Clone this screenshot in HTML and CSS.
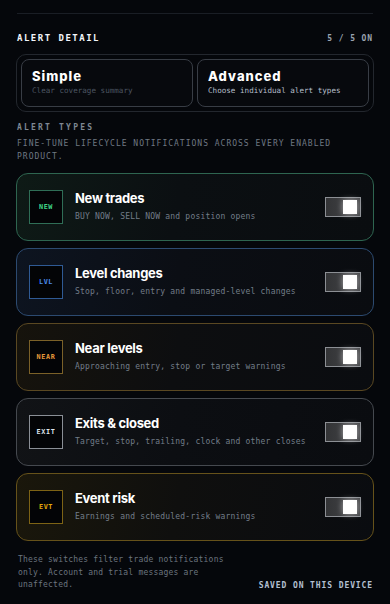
FILE: index.html
```html
<!DOCTYPE html>
<html>
<head>
<meta charset="utf-8">
<link rel="stylesheet" href="styles.css">
</head>
<body>
<div class="page">
  <div class="divider"></div>
  <div class="head-row">
    <span class="section-title">ALERT DETAIL</span>
    <span class="count">5 / 5 ON</span>
  </div>
  <div class="segment">
    <div class="seg-btn">
      <div class="seg-title">Simple</div>
      <div class="seg-desc">Clear coverage summary</div>
    </div>
    <div class="seg-btn active">
      <div class="seg-title">Advanced</div>
      <div class="seg-desc">Choose individual alert types</div>
    </div>
  </div>
  <div class="types-title">ALERT TYPES</div>
  <div class="types-desc">FINE-TUNE LIFECYCLE NOTIFICATIONS ACROSS EVERY ENABLED PRODUCT.</div>

  <div class="cards">
    <div class="card green">
      <div class="tag">NEW</div>
      <div class="info">
        <div class="title">New trades</div>
        <div class="desc">BUY NOW, SELL NOW and position opens</div>
      </div>
      <div class="toggle"><span class="knob"></span></div>
    </div>
    <div class="card blue">
      <div class="tag">LVL</div>
      <div class="info">
        <div class="title">Level changes</div>
        <div class="desc">Stop, floor, entry and managed-level changes</div>
      </div>
      <div class="toggle"><span class="knob"></span></div>
    </div>
    <div class="card orange">
      <div class="tag">NEAR</div>
      <div class="info">
        <div class="title">Near levels</div>
        <div class="desc">Approaching entry, stop or target warnings</div>
      </div>
      <div class="toggle"><span class="knob"></span></div>
    </div>
    <div class="card gray">
      <div class="tag">EXIT</div>
      <div class="info">
        <div class="title">Exits &amp; closed</div>
        <div class="desc">Target, stop, trailing, clock and other closes</div>
      </div>
      <div class="toggle"><span class="knob"></span></div>
    </div>
    <div class="card gold">
      <div class="tag">EVT</div>
      <div class="info">
        <div class="title">Event risk</div>
        <div class="desc">Earnings and scheduled-risk warnings</div>
      </div>
      <div class="toggle"><span class="knob"></span></div>
    </div>
  </div>

  <div class="footer">
    <div class="note">These switches filter trade notifications only. Account and trial messages are unaffected.</div>
    <div class="saved">SAVED ON THIS DEVICE</div>
  </div>
</div>
</body>
</html>
```
FILE: styles.css
```css
html, body {
  margin: 0;
  padding: 0;
  background: #05070b;
}
body {
  font-family: "DejaVu Sans Mono", monospace;
  color: #e8ecf2;
}
.page {
  padding: 13px 16px 0 16px;
}
.divider {
  height: 1px;
  background: #1a1e25;
  margin: 0 1px;
}
.head-row {
  display: flex;
  justify-content: space-between;
  align-items: center;
  margin-top: 17px;
  height: 14px;
  padding: 0 1px;
}
.section-title {
  font-size: 9px;
  font-weight: bold;
  letter-spacing: 1.5px;
  color: #f2f5fa;
}
.count {
  font-size: 8px;
  font-weight: bold;
  letter-spacing: 0.9px;
  color: #9aa3b0;
}
.segment {
  margin-top: 9px;
  border: 1px solid #23272e;
  border-radius: 10px;
  padding: 4px;
  display: grid;
  grid-template-columns: 1fr 1fr;
  gap: 4px;
}
.seg-btn {
  box-sizing: border-box;
  border: 1px solid #383d45;
  border-radius: 8px;
  height: 48px;
  padding: 0 10px 2px 10px;
  display: flex;
  flex-direction: column;
  justify-content: center;
  background: #07090d;
}
.seg-title {
  font-family: Inter, "Liberation Sans", sans-serif;
  font-weight: 800;
  font-size: 13px;
  letter-spacing: 1px;
  line-height: 16px;
  color: #ffffff;
}
.seg-desc {
  font-size: 7.6px;
  line-height: 10px;
  margin-top: 2px;
  color: #4c5561;
}
.seg-btn.active .seg-desc {
  color: #b6bfcb;
}
.types-title {
  margin-top: 9px;
  font-size: 8px;
  font-weight: bold;
  letter-spacing: 2.2px;
  color: #7f8893;
  line-height: 14px;
  padding-left: 1px;
}
.types-desc {
  margin-top: 2px;
  font-size: 8px;
  letter-spacing: 1px;
  line-height: 13px;
  color: #6f7883;
  padding-left: 1px;
  padding-right: 30px;
}
.cards {
  margin-top: 10px;
  display: flex;
  flex-direction: column;
  gap: 7px;
}
.card {
  height: 66px;
  border: 1px solid #333;
  border-radius: 12px;
  padding: 0 12px;
  display: flex;
  align-items: center;
  background: linear-gradient(100deg, #0d1114 0%, #0a0d11 100%);
}
.card.green {
  border-color: #2e6550;
  background: linear-gradient(100deg, #0e1a16 0%, #0b0f12 45%, #0a0d10 100%);
}
.card.blue {
  border-color: #2c4a70;
  background: linear-gradient(100deg, #0d1420 0%, #0b0e14 45%, #0a0c10 100%);
}
.card.orange {
  border-color: #5a4822;
  background: linear-gradient(100deg, #16130c 0%, #0d0e10 45%, #0a0c10 100%);
}
.card.gray {
  border-color: #45494f;
  background: linear-gradient(100deg, #111316 0%, #0c0e12 45%, #0a0c10 100%);
}
.card.gold {
  border-color: #66521a;
  background: linear-gradient(100deg, #1a170b 0%, #0f0f0e 45%, #0a0c10 100%);
}
.tag {
  width: 32px;
  height: 32px;
  flex: none;
  border: 1px solid #444;
  background: #030406;
  display: flex;
  align-items: center;
  justify-content: center;
  font-size: 6.8px;
  font-weight: bold;
  letter-spacing: 0.6px;
}
.green .tag { border-color: #2f6e56; color: #40d98a; }
.blue .tag { border-color: #2f5a94; color: #4a8cf0; }
.orange .tag { border-color: #7b6128; color: #ea9a3a; }
.gray .tag { border-color: #8a8f96; color: #dfe4ec; }
.gold .tag { border-color: #7d6315; color: #e6a90a; }
.info {
  flex: 1;
  margin-left: 12px;
  display: flex;
  flex-direction: column;
  margin-bottom: 2px;
}
.title {
  font-family: Inter, "Liberation Sans", sans-serif;
  font-weight: 700;
  font-size: 13px;
  letter-spacing: -0.3px;
  line-height: 16px;
  color: #ffffff;
}
.desc {
  margin-top: 5px;
  font-size: 8px;
  letter-spacing: 0.2px;
  line-height: 11px;
  color: #737d89;
}
.toggle {
  width: 34px;
  height: 18px;
  flex: none;
  border: 1px solid #8c8f94;
  background: linear-gradient(90deg, #333436 0%, #46474a 100%);
  position: relative;
}
.knob {
  position: absolute;
  right: 3px;
  top: 2px;
  width: 14px;
  height: 14px;
  background: #ffffff;
  box-shadow: 0 0 6px rgba(255, 255, 255, 0.55);
}
.footer {
  margin-top: 13px;
  display: flex;
  justify-content: space-between;
  align-items: flex-end;
  padding-left: 2px;
  padding-right: 1px;
}
.note {
  width: 215px;
  font-size: 8px;
  letter-spacing: 0.2px;
  line-height: 12.5px;
  color: #6b747f;
}
.saved {
  font-size: 8px;
  font-weight: bold;
  letter-spacing: 0.9px;
  line-height: 12px;
  color: #b4c0d2;
  margin-bottom: 0;
}
```
